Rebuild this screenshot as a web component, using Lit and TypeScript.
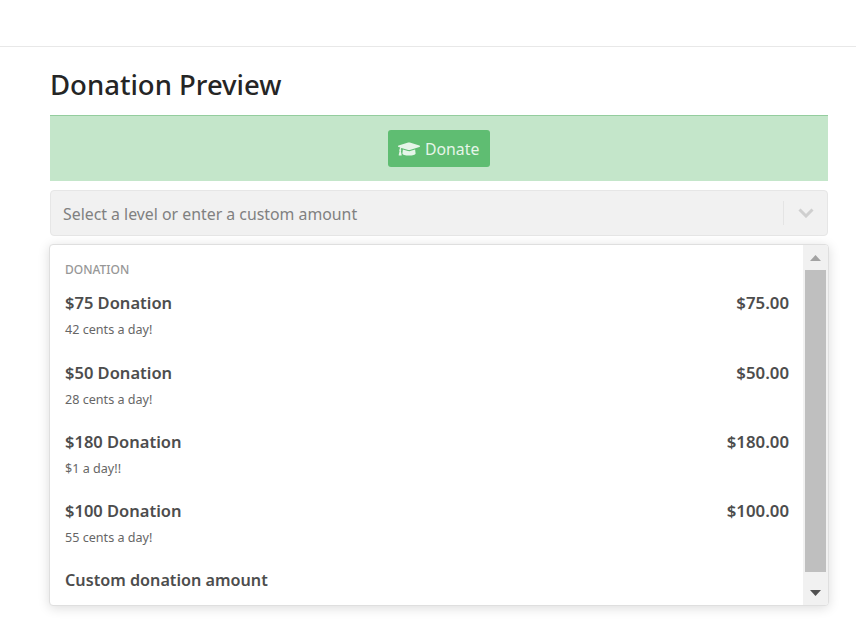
import { LitElement, html, css } from "lit";
import { customElement } from "lit/decorators.js";

const levels = [
  { name: "$75 Donation", price: "$75.00", note: "42 cents a day!" },
  { name: "$50 Donation", price: "$50.00", note: "28 cents a day!" },
  { name: "$180 Donation", price: "$180.00", note: "$1 a day!!" },
  { name: "$100 Donation", price: "$100.00", note: "55 cents a day!" },
];

@customElement("app-root")
export class AppRoot extends LitElement {
  static styles = css`
    :host {
      display: block;
      height: 638px;
      overflow: hidden;
      background: #fff;
      font-family: "Noto Sans", "Open Sans", sans-serif;
      color: #4a4a4a;
    }
    .top {
      height: 46px;
      border-bottom: 1px solid #e8e8e8;
    }
    .content {
      display: flex;
      flex-direction: column;
      padding: 0 28px 0 50px;
    }
    h1 {
      margin: 0;
      height: 68px;
      box-sizing: border-box;
      padding-top: 6px;
      display: flex;
      align-items: center;
      font-size: 27.5px;
      font-weight: 500;
      color: #252525;
    }
    .banner {
      height: 65px;
      background: #c4e6ca;
      border-top: 1px solid #94cd9e;
      display: flex;
      align-items: center;
      justify-content: center;
    }
    .btn {
      display: flex;
      align-items: center;
      gap: 5px;
      height: 37px;
      width: 102px;
      box-sizing: border-box;
      padding-left: 10px;
      border-radius: 3px;
      background: #5fbd72;
      color: #e6f5e9;
      font-size: 15.8px;
    }
    .btn svg {
      width: 22px;
      height: 18px;
      fill: #e6f5e9;
    }
    .select {
      margin-top: 9px;
      height: 46px;
      box-sizing: border-box;
      border: 1px solid #e6e6e6;
      border-radius: 4px;
      background: #f1f1f1;
      display: flex;
      align-items: center;
      padding: 2px 0 0 12px;
      color: #808080;
      font-size: 15.85px;
    }
    .select .ph {
      flex: 1;
    }
    .sep {
      width: 1px;
      height: 24px;
      margin-top: -2px;
      background: #e4e4e4;
    }
    .chev {
      width: 43px;
      margin-top: -2px;
      display: flex;
      justify-content: center;
    }
    .chev svg {
      width: 16px;
      height: 10px;
      fill: none;
      stroke: #cfcfcf;
      stroke-width: 3;
    }
    .menu {
      margin: 8px -1px 0 -1px;
      height: 362px;
      box-sizing: border-box;
      border: 1px solid #dfdfdf;
      border-radius: 4px;
      background: #fff;
      box-shadow: 0 2px 12px rgba(0, 0, 0, 0.14);
      display: flex;
      overflow: hidden;
    }
    .list {
      flex: 1;
      padding: 17px 14px 0 15px;
      min-width: 0;
    }
    .group {
      font-size: 12px;
      line-height: 16px;
      color: #979797;
      font-weight: 500;
      height: 17px;
      margin-bottom: 10.9px;
    }
    .item {
      height: 69.25px;
    }
    .row {
      display: flex;
      justify-content: space-between;
      height: 26px;
      align-items: center;
      font-size: 16.5px;
      font-weight: 600;
      color: #4d4d4d;
    }
    .price {
      font-size: 16.8px;
    }
    .custom {
      font-size: 16.2px;
    }
    .note {
      margin-top: 5.4px;
      font-size: 12.6px;
      line-height: 17px;
      color: #666;
    }
    .bar {
      width: 25px;
      background: #f1f1f1;
      display: flex;
      flex-direction: column;
      align-items: flex-start;
      padding-left: 2px;
      box-sizing: border-box;
    }
    .arrow {
      display: flex;
      justify-content: center;
      width: 21px;
    }
    .arrow.up {
      height: 25px;
      align-items: center;
    }
    .arrow.down {
      height: 33px;
      padding-top: 18px;
      box-sizing: border-box;
    }
    .arrow svg {
      width: 11px;
      height: 6px;
    }
    .thumb {
      width: 21px;
      flex: 1;
      background: #bfbfbf;
    }
  `;

  render() {
    return html`
      <div class="top"></div>
      <div class="content">
        <h1>Donation Preview</h1>
        <div class="banner">
          <div class="btn">
            <svg viewBox="0 0 640 512"><path d="M622.34 153.2L343.4 67.5c-15.2-4.67-31.6-4.67-46.79 0L17.66 153.2c-23.54 7.23-23.54 38.36 0 45.59l48.63 14.94c-10.67 13.19-17.23 29.28-17.88 46.9C38.78 266.15 32 276.11 32 288c0 10.78 5.68 19.85 13.86 25.65L20.33 428.53C18.11 438.52 25.71 448 35.94 448h56.11c10.24 0 17.84-9.48 15.62-19.47L82.14 313.65C90.32 307.85 96 298.78 96 288c0-11.57-6.47-21.25-15.66-26.87.76-15.02 8.44-28.3 20.69-36.72L296.6 284.5c9.06 2.78 26.44 6.25 46.79 0l278.95-85.7c23.55-7.24 23.55-38.36 0-45.6zM352.79 315.09c-28.53 8.76-52.84 3.92-65.59 0l-145.02-44.55L128 384c0 35.35 85.96 64 192 64s192-28.65 192-64l-14.18-113.47-145.03 44.56z"/></svg>
            <span>Donate</span>
          </div>
        </div>
        <div class="select">
          <span class="ph">Select a level or enter a custom amount</span>
          <span class="sep"></span>
          <span class="chev"><svg viewBox="0 0 16 10"><path d="M1.5 1.5L8 8l6.5-6.5"/></svg></span>
        </div>
        <div class="menu">
          <div class="list">
            <div class="group">DONATION</div>
            ${levels.map(
              (l) => html`<div class="item">
                <div class="row"><span>${l.name}</span><span class="price">${l.price}</span></div>
                <div class="note">${l.note}</div>
              </div>`
            )}
            <div class="row"><span class="custom">Custom donation amount</span></div>
          </div>
          <div class="bar">
            <div class="arrow up"><svg viewBox="0 0 11 6"><path d="M5.5 0L11 6H0z" fill="#a3a3a3"/></svg></div>
            <div class="thumb"></div>
            <div class="arrow down"><svg viewBox="0 0 11 6"><path d="M0 0h11L5.5 6z" fill="#505050"/></svg></div>
          </div>
        </div>
      </div>
    `;
  }
}
